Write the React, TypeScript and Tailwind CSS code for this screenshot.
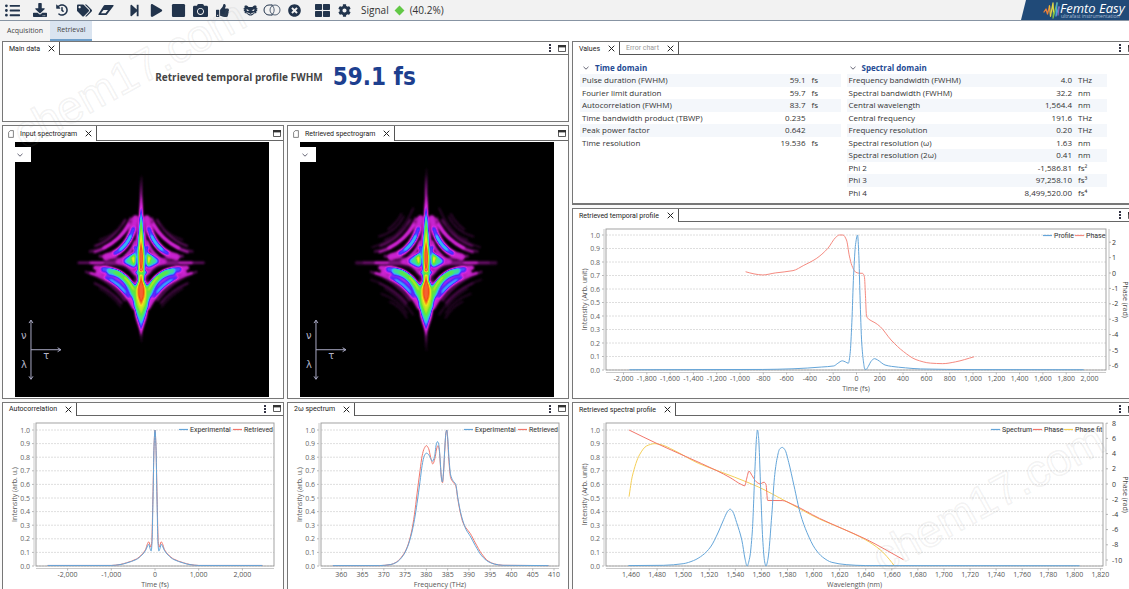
import { useId, useState, type ReactNode } from 'react';
import {
  FaCamera,
  FaCog,
  FaDownload,
  FaHistory,
  FaListUl,
  FaPlay,
  FaStepForward,
  FaStop,
  FaTags,
  FaThLarge,
  FaThumbsUp,
  FaTimesCircle,
} from 'react-icons/fa';

type Point = [number, number];

interface Series {
  label: string;
  color: string;
  points: Point[];
}

interface Tick {
  at: number;
  label: string;
}

interface Plot {
  left: number;
  right: number;
  top: number;
  bottom: number;
}

interface ChartProps {
  title: string;
  viewBox: string;
  plot: Plot;
  // pixel position of the y = 1.0 gridline
  unitTop: number;
  yLabel: string;
  yLabelX: number;
  xLabel: string;
  xTicks: Tick[];
  toX: (v: number) => number;
  series: Series[];
  legend: number[];
  phaseTicks?: Tick[];
}

// Monotone cubic interpolation, so that narrow peaks never overshoot
function smoothPath(pts: Point[]) {
  const n = pts.length;
  const slopes = pts.slice(1).map((p, i) => (p[1] - pts[i][1]) / (p[0] - pts[i][0]));
  const tangents = pts.map((_, i) => {
    if (i === 0) return slopes[0];
    if (i === n - 1) return slopes[n - 2];
    const a = slopes[i - 1];
    const b = slopes[i];
    return a * b <= 0 ? 0 : (2 * a * b) / (a + b);
  });
  let d = `M${pts[0][0].toFixed(2)} ${pts[0][1].toFixed(2)}`;
  for (let i = 1; i < n; i++) {
    const [x0, y0] = pts[i - 1];
    const [x1, y1] = pts[i];
    const h = (x1 - x0) / 3;
    d += `C${(x0 + h).toFixed(2)} ${(y0 + h * tangents[i - 1]).toFixed(2)} ${(x1 - h).toFixed(2)} ${(y1 - h * tangents[i]).toFixed(2)} ${x1.toFixed(2)} ${y1.toFixed(2)}`;
  }
  return d;
}

const BLUE = '#64a5d9';
const RED = '#f2766b';
const PINK = '#f58a80';
const YELLOW = '#f5cf57';

function Chart({
  title,
  viewBox,
  plot,
  unitTop,
  yLabel,
  yLabelX,
  xLabel,
  xTicks,
  toX,
  series,
  legend,
  phaseTicks,
}: ChartProps) {
  const toY = (v: number) => plot.bottom - v * (plot.bottom - unitTop);
  const midX = (plot.left + plot.right) / 2;
  const midY = (plot.top + plot.bottom) / 2;
  const levels = Array.from({ length: 11 }, (_, i) => i / 10);

  return (
    <svg
      viewBox={viewBox}
      role="img"
      aria-label={title}
      className="block h-auto w-full font-['Open_Sans',sans-serif] text-[7px]"
    >
      {levels.map((v) => (
        <g key={v}>
          <line x1={plot.left} x2={plot.right} y1={toY(v)} y2={toY(v)} stroke="#d6d6d6" strokeDasharray="2 1" strokeWidth="0.8" />
          <line x1={plot.left - 4} x2={plot.left - 2} y1={toY(v)} y2={toY(v)} stroke="#999" strokeWidth="0.7" />
          <text x={plot.left - 6} y={toY(v) + 2.5} textAnchor="end" fill="#666">
            {v.toFixed(1)}
          </text>
        </g>
      ))}
      <rect
        x={plot.left}
        y={plot.top}
        width={plot.right - plot.left}
        height={plot.bottom - plot.top}
        fill="none"
        stroke="#999"
        strokeWidth="0.9"
      />
      <path d={`M${plot.left - 2} ${plot.top}V${plot.bottom}M${plot.left} ${plot.bottom + 2.5}H${plot.right}`} stroke="#c4c4c4" strokeWidth="0.9" />
      {xTicks.map((t) => (
        <g key={t.label}>
          <line x1={toX(t.at)} x2={toX(t.at)} y1={plot.bottom + 2.5} y2={plot.bottom + 4.5} stroke="#999" strokeWidth="0.7" />
          <text x={toX(t.at)} y={plot.bottom + 11} textAnchor="middle" fill="#555">
            {t.label}
          </text>
        </g>
      ))}
      <text x={midX} y={plot.bottom + 21} textAnchor="middle" fill="#555">
        {xLabel}
      </text>
      <text transform={`translate(${yLabelX} ${midY}) rotate(-90)`} textAnchor="middle" fill="#555">
        {yLabel}
      </text>
      {phaseTicks && (
        <>
          <line x1={plot.right + 3} x2={plot.right + 3} y1={plot.top} y2={plot.bottom} stroke="#bbb" strokeWidth="0.9" />
          {phaseTicks.map((t) => (
            <g key={t.label}>
              <line x1={plot.right + 3} x2={plot.right + 5} y1={t.at} y2={t.at} stroke="#999" strokeWidth="0.7" />
              <text x={1112} y={t.at + 2.5} fill="#333">
                {t.label}
              </text>
            </g>
          ))}
          <text transform={`translate(1123 ${midY}) rotate(90)`} textAnchor="middle" fill="#444">
            Phase (rad)
          </text>
        </>
      )}
      {series
        .slice()
        .reverse()
        .map((s) => (
          <path
            key={s.label}
            d={smoothPath(s.points.map(([x, y]) => [toX(x), toY(y)]))}
            fill="none"
            stroke={s.color}
            strokeWidth="1"
            strokeLinejoin="round"
          />
        ))}
      {series.map((s, i) => (
        <g key={s.label}>
          <line x1={legend[i] - 11} x2={legend[i] - 2} y1={plot.top + 6.5} y2={plot.top + 6.5} stroke={s.color} strokeWidth="1.2" />
          <text x={legend[i]} y={plot.top + 9} fill="#333" className="font-['Roboto',sans-serif]">
            {s.label}
          </text>
        </g>
      ))}
    </svg>
  );
}

const mirror = (half: Point[]): Point[] => [...half, ...half.slice(0, -1).reverse().map(([x, y]): Point => [-x, y])];

const autocorrelation: Series[] = [
  {
    label: 'Experimental',
    color: BLUE,
    points: mirror([
      [-2458, 0.004], [-1000, 0.004], [-800, 0.01], [-650, 0.022], [-427, 0.048], [-300, 0.08], [-215, 0.115],
      [-170, 0.148], [-142, 0.16], [-115, 0.13], [-88, 0.11], [-70, 0.16], [-45, 0.5], [-22, 0.88], [0, 1],
    ]),
  },
  {
    label: 'Retrieved',
    color: RED,
    points: mirror([
      [-2458, 0.004], [-1000, 0.004], [-800, 0.011], [-650, 0.024], [-427, 0.051], [-300, 0.085], [-215, 0.122],
      [-170, 0.165], [-142, 0.178], [-115, 0.155], [-92, 0.138], [-74, 0.18], [-48, 0.5], [-22, 0.88], [0, 1],
    ]),
  },
];

const harmonicSpectrum: Series[] = [
  {
    label: 'Experimental',
    color: BLUE,
    points: [
      [358, 0.003], [369, 0.003], [371.5, 0.01], [373, 0.027], [374.5, 0.075], [375.5, 0.135], [376.5, 0.235],
      [377.2, 0.34], [377.8, 0.46], [378.5, 0.62], [379, 0.74], [379.5, 0.81], [380, 0.83], [380.5, 0.82],
      [381, 0.79], [381.4, 0.77], [381.9, 0.8], [382.3, 0.89], [382.6, 0.915], [382.9, 0.895], [383.2, 0.8],
      [383.5, 0.66], [383.75, 0.618], [384, 0.68], [384.3, 0.85], [384.6, 0.98], [384.8, 1], [385, 0.95],
      [385.3, 0.8], [385.7, 0.67], [386.2, 0.63], [386.9, 0.6], [387.4, 0.5], [388, 0.4], [388.6, 0.33],
      [389.3, 0.27], [390.3, 0.22], [391.5, 0.15], [393, 0.075], [394.5, 0.033], [396, 0.014], [398, 0.005], [408.7, 0.003],
    ],
  },
  {
    label: 'Retrieved',
    color: RED,
    points: [
      [358, 0.003], [369, 0.003], [371.5, 0.01], [373, 0.03], [374.5, 0.08], [375.5, 0.14], [376.5, 0.25],
      [377.2, 0.38], [377.8, 0.53], [378.5, 0.7], [379, 0.81], [379.5, 0.865], [380, 0.885], [380.5, 0.865],
      [381, 0.8], [381.5, 0.75], [382, 0.79], [382.4, 0.86], [382.7, 0.885], [383, 0.86], [383.3, 0.74],
      [383.6, 0.63], [383.8, 0.612], [384, 0.67], [384.3, 0.84], [384.6, 0.98], [384.8, 1], [385, 0.93],
      [385.3, 0.77], [385.7, 0.65], [386.2, 0.62], [386.9, 0.59], [387.4, 0.49], [388, 0.39], [388.6, 0.32],
      [389.3, 0.28], [390.3, 0.24], [391.5, 0.17], [393, 0.09], [394.5, 0.037], [396, 0.015], [398, 0.005], [408.7, 0.003],
    ],
  },
];

const temporalProfile: Series[] = [
  {
    label: 'Profile',
    color: BLUE,
    points: [
      [-1950, 0.002], [-805, 0.004], [-545, 0.009], [-300, 0.022], [-195, 0.03], [-160, 0.05], [-122, 0.068],
      [-95, 0.06], [-70, 0.05], [-55, 0.12], [-40, 0.35], [-25, 0.7], [-8, 0.93], [9, 1], [20, 0.85],
      [30, 0.55], [45, 0.2], [60, 0.06], [72, 0.005], [84, 0.005], [100, 0.025], [130, 0.07], [155, 0.084],
      [180, 0.075], [245, 0.037], [300, 0.027], [420, 0.016], [550, 0.008], [1000, 0.003], [1950, 0.002],
    ],
  },
  {
    label: 'Phase',
    color: PINK,
    points: [
      [-952, 0.728], [-880, 0.712], [-805, 0.704], [-698, 0.719], [-545, 0.736], [-453, 0.775], [-346, 0.825],
      [-248, 0.899], [-178, 0.983], [-147, 1], [-116, 1], [-86, 0.963], [-61, 0.844], [-40, 0.775], [-9, 0.726],
      [20, 0.717], [52, 0.716], [68, 0.69], [77, 0.55], [86, 0.4], [107, 0.375], [159, 0.35], [205, 0.32],
      [297, 0.222], [404, 0.136], [511, 0.077], [634, 0.051], [740, 0.047], [848, 0.06], [1010, 0.098],
    ],
  },
];

const spectralProfile: Series[] = [
  {
    label: 'Spectrum',
    color: BLUE,
    points: [
      [1458, 0.003], [1485, 0.005], [1500, 0.017], [1508, 0.04], [1515, 0.08], [1521, 0.14], [1527, 0.25],
      [1531, 0.34], [1534, 0.4], [1536, 0.418], [1538, 0.4], [1541, 0.32], [1545, 0.19], [1547.5, 0.05], [1549, 0],
      [1551, 0.06], [1553, 0.25], [1555, 0.7], [1556.3, 0.95], [1557, 1], [1557.8, 0.95], [1559.5, 0.55],
      [1561, 0.2], [1562.5, 0.03], [1563.5, 0], [1565, 0.05], [1568, 0.38], [1570, 0.65], [1572, 0.79],
      [1574, 0.86], [1576, 0.872], [1578, 0.855], [1581, 0.76], [1585, 0.59], [1590, 0.38], [1595, 0.245],
      [1601, 0.13], [1607, 0.065], [1614, 0.027], [1625, 0.01], [1640, 0.003], [1804, 0.002],
    ],
  },
  {
    label: 'Phase',
    color: RED,
    points: [
      [1458.5, 1], [1480, 0.9], [1502, 0.805], [1526, 0.7], [1536, 0.65], [1544.5, 0.6], [1547.3, 0.59],
      [1548.6, 0.638], [1550.5, 0.697], [1552.7, 0.667], [1556, 0.62], [1559, 0.604], [1562, 0.616],
      [1563.5, 0.6], [1564.8, 0.482], [1576, 0.481], [1583, 0.457], [1604.6, 0.35], [1622, 0.275],
      [1640, 0.198], [1669, 0.046],
    ],
  },
  {
    label: 'Phase fit',
    color: YELLOW,
    points: [
      [1458.5, 0.51], [1461, 0.66], [1466.5, 0.817], [1472, 0.883], [1478.3, 0.9], [1483.8, 0.89], [1492.5, 0.853],
      [1511.7, 0.755], [1526, 0.702], [1539.5, 0.653], [1558, 0.58], [1577, 0.485], [1604.6, 0.345], [1622, 0.275],
      [1640, 0.192], [1651, 0.12], [1658, 0.05], [1662, 0],
    ],
  },
];

const range = (from: number, to: number, step: number) =>
  Array.from({ length: Math.round((to - from) / step) + 1 }, (_, i) => from + i * step);

const ticks = (values: number[]): Tick[] => values.map((v) => ({ at: v, label: v.toLocaleString('en-US') }));

// Each stroke: path, grey level (0..1), width. Levels go through the colour map below.
const traceStrokes: [string, number, number][] = [
  // faint outer fringes
  ['M286 318Q340 300 376 240', 0.14, 6],
  ['M300 300Q345 285 364 255', 0.07, 5],
  ['M270 335Q345 322 388 248', 0.1, 7],
  ['M258 396Q330 420 375 482', 0.14, 6],
  ['M284 430Q335 452 365 490', 0.12, 5],
  ['M300 446Q340 470 362 500', 0.06, 5],
  // horizontal axis
  ['M236 369H330', 0.16, 6],
  ['M272 369H340', 0.26, 8],
  ['M320 369H372', 0.15, 16],
  ['M300 349Q345 356 385 360', 0.15, 8],
  // second upper fringe
  ['M284 337Q355 318 393 236', 0.22, 7],
  ['M312 324Q362 300 388 254', 0.31, 9],
  // first upper fringe
  ['M318 351Q388 336 407 236', 0.27, 20],
  ['M347 339Q384 322 401 268', 0.42, 15],
  ['M362 328Q382 312 392 290', 0.53, 11],
  // lower fringes
  ['M272 400Q355 418 402 506', 0.27, 8],
  ['M296 396Q372 408 404 500', 0.28, 17],
  ['M322 412Q362 430 386 466', 0.42, 17],
  ['M334 420Q358 434 376 456', 0.53, 9],
  ['M286 384Q360 378 408 450', 0.28, 12],
  ['M312 388Q366 392 404 450', 0.43, 18],
  ['M332 394Q384 402 410 478', 0.58, 20],
  ['M350 398Q390 414 412 486', 0.67, 15],
  ['M376 412Q398 432 414 476', 0.78, 9],
  // gap above the lower wing
  ['M300 401Q366 420 390 470', 0.22, 2],
  ['M352 378Q392 382 411 424', 0.06, 6],
  // inner lobes
  ['M352 366Q392 346 406 306M356 368Q388 374 404 400', 0.27, 9],
  ['M376 364L402 344V378Z', 0.44, 14],
  ['M408 322V350', 0.54, 10],
  ['M382 364L402 348V374Z', 0.6, 10],
  ['M396 354L403 350V370Z', 0.74, 10],
  ['M401 354V366', 0.86, 6],
];

// Vertical lens shapes on the delay-zero axis: top, bottom, half width, level
const spine: [number, number, number, number][] = [
  [190, 570, 22, 0.22],
  [104, 612, 9, 0.28],
  [400, 590, 20, 0.33],
  [165, 585, 9, 0.44],
  [395, 572, 20, 0.47],
  [186, 560, 9, 0.56],
  [395, 552, 22, 0.62],
  [206, 530, 10, 0.68],
  [405, 532, 18, 0.76],
  [226, 516, 8, 0.82],
  [304, 400, 9, 0.92],
  [408, 500, 11, 0.92],
];

const lens = (top: number, bottom: number, half: number) => {
  const quarter = (bottom - top) / 4;
  return `M424 ${top}C${424 + half / 2} ${top + quarter} ${424 + half} ${top + quarter} ${424 + half} ${top + quarter * 2}C${424 + half} ${bottom - quarter} ${424 + half / 2} ${bottom - quarter} 424 ${bottom}C${424 - half / 2} ${bottom - quarter} ${424 - half} ${bottom - quarter} ${424 - half} ${top + quarter * 2}C${424 - half} ${top + quarter} ${424 - half / 2} ${top + quarter} 424 ${top}Z`;
};

const grey = (level: number) => {
  const v = Math.round(level * 255);
  return `rgb(${v} ${v} ${v})`;
};

function HalfTrace() {
  return (
    <g fill="none" strokeLinecap="round" strokeLinejoin="round">
      {traceStrokes.map(([d, level, width]) => (
        <path key={d} d={d} stroke={grey(level)} strokeWidth={width} />
      ))}
    </g>
  );
}

function Spectrogram({ label, retrieved = false }: { label: string; retrieved?: boolean }) {
  const id = useId();
  return (
    <svg viewBox="45 6 763 765" role="img" aria-label={label} className="block h-auto w-full bg-black">
      <filter id={id} filterUnits="userSpaceOnUse" x="45" y="6" width="763" height="765" colorInterpolationFilters="sRGB">
        <feGaussianBlur stdDeviation="2.6" />
        <feComponentTransfer>
          <feFuncR type="table" tableValues="0 .3 .65 .85 .3 .2 .25 .4 .95 .95 1" />
          <feFuncG type="table" tableValues="0 .04 .1 .15 .15 .7 .9 .9 .9 .3 .7" />
          <feFuncB type="table" tableValues="0 .3 .65 .88 1 1 .5 .2 .1 .08 .6" />
        </feComponentTransfer>
      </filter>
      <g filter={`url(#${id})`}>
        <rect x="45" y="6" width="763" height="765" fill="#000" />
        {retrieved && (
          <g fill="none" strokeLinecap="round">
            {[0, 1].map((side) => (
              <g key={side} transform={side ? 'matrix(-1 0 0 1 848 0)' : undefined}>
                <path d="M282 290Q335 275 356 230M310 268Q335 250 350 222M262 322Q345 300 385 205" stroke={grey(0.07)} strokeWidth="5" />
                <path d="M290 462Q340 480 366 520M315 486Q345 500 366 534M258 420Q330 440 385 525" stroke={grey(0.06)} strokeWidth="5" />
                <path d="M215 369H330" stroke={grey(0.09)} strokeWidth="10" />
              </g>
            ))}
            <path d={lens(80, 640, 8)} fill={grey(0.2)} />
          </g>
        )}
        {spine.slice(0, 1).map(([top, bottom, half, level]) => (
          <path key={level} d={lens(top, bottom, half)} fill={grey(level)} />
        ))}
        <HalfTrace />
        <g transform="matrix(-1 0 0 1 848 0)">
          <HalfTrace />
        </g>
        <path d="M412 300V402M436 300V402" stroke={grey(0.2)} strokeWidth="4" />
        {spine.slice(1).map(([top, bottom, half, level]) => (
          <path key={`${top}-${bottom}`} d={lens(top, bottom, half)} fill={grey(level)} />
        ))}
        <path d="M408 398H440" stroke={grey(0.6)} strokeWidth="9" />
        <circle cx="424" cy="391" r="6" fill={grey(1)} />
      </g>
      <g fill="none" stroke="#a9a9c4" strokeWidth="3">
        <path d="M93 542V718M87 550L93 541L99 550M87 710L93 719L99 710M93 630H182M173 624L183 630L173 636" />
      </g>
      <g fill="#b4b4c8" className="font-['DejaVu_Sans',sans-serif] text-[30px]">
        <text x="63" y="597">ν</text>
        <text x="63" y="685">λ</text>
        <text x="130" y="659">τ</text>
      </g>
    </svg>
  );
}

function CloseIcon() {
  return (
    <svg width="7" height="7" viewBox="0 0 7 7" stroke="#222" strokeWidth="1" aria-hidden="true">
      <path d="M.7 .7L6.3 6.3M6.3 .7L.7 6.3" />
    </svg>
  );
}

function PageIcon() {
  return (
    <svg width="6" height="8" viewBox="0 0 6 8" fill="none" stroke="#666" strokeWidth="0.8" aria-hidden="true">
      <path d="M2.2 .6H5.4V7.4H.6V2.4Z" />
    </svg>
  );
}

interface PanelProps {
  tabs: string[];
  page?: boolean;
  menu?: boolean;
  className?: string;
  children: ReactNode;
}

function Panel({ tabs, page = false, menu = true, className = '', children }: PanelProps) {
  const [active, setActive] = useState(tabs[0]);
  return (
    <section className={`flex flex-col border border-[#777] bg-white ${className}`}>
      <header className={`flex items-stretch ${page ? 'h-[15px]' : 'h-[13px]'}`}>
        {tabs.map((tab) => (
          <div
            key={tab}
            className={`flex items-center gap-2 border-r border-[#555] pr-1 ${page ? 'pl-[5px]' : 'pl-[6px]'} ${tab === active ? '' : 'border-b'}`}
          >
            <button
              type="button"
              onClick={() => setActive(tab)}
              className={`flex items-center gap-[6px] font-['Roboto',sans-serif] text-[7px] leading-[10px] whitespace-nowrap ${tab === active ? 'text-[#222]' : 'text-[#999]'}`}
            >
              {page && <PageIcon />}
              {tab}
            </button>
            <button type="button" aria-label={`Close ${tab}`}>
              <CloseIcon />
            </button>
          </div>
        ))}
        <div className="flex flex-1 items-center justify-end gap-[7px] border-b border-[#666] pr-[2px]">
          {menu && (
            <button type="button" aria-label="Panel menu">
              <svg width="2" height="8" viewBox="0 0 2 8" fill="#334" aria-hidden="true">
                <path d="M0 0h2v2H0zM0 3h2v2H0zM0 6h2v2H0z" />
              </svg>
            </button>
          )}
          <button type="button" aria-label="Maximize panel">
            <svg width="8" height="7" viewBox="0 0 8 7" aria-hidden="true">
              <path d="M.5 1V6.5H7.5V1Z" fill="#fff" stroke="#333" strokeWidth="0.8" />
              <path d="M0 0H8V2.4H0Z" fill="#333" />
            </svg>
          </button>
        </div>
      </header>
      {children}
    </section>
  );
}

interface Measure {
  name: string;
  value: string;
  unit: string;
}

const timeDomain: Measure[] = [
  { name: 'Pulse duration (FWHM)', value: '59.1', unit: 'fs' },
  { name: 'Fourier limit duration', value: '59.7', unit: 'fs' },
  { name: 'Autocorrelation (FWHM)', value: '83.7', unit: 'fs' },
  { name: 'Time bandwidth product (TBWP)', value: '0.235', unit: '' },
  { name: 'Peak power factor', value: '0.642', unit: '' },
  { name: 'Time resolution', value: '19.536', unit: 'fs' },
];

const spectralDomain: Measure[] = [
  { name: 'Frequency bandwidth (FWHM)', value: '4.0', unit: 'THz' },
  { name: 'Spectral bandwidth (FWHM)', value: '32.2', unit: 'nm' },
  { name: 'Central wavelength', value: '1,564.4', unit: 'nm' },
  { name: 'Central frequency', value: '191.6', unit: 'THz' },
  { name: 'Frequency resolution', value: '0.20', unit: 'THz' },
  { name: 'Spectral resolution (ω)', value: '1.63', unit: 'nm' },
  { name: 'Spectral resolution (2ω)', value: '0.41', unit: 'nm' },
  { name: 'Phi 2', value: '-1,586.81', unit: 'fs²' },
  { name: 'Phi 3', value: '97,258.10', unit: 'fs³' },
  { name: 'Phi 4', value: '8,499,520.00', unit: 'fs⁴' },
];

function Chevron() {
  return (
    <svg width="6" height="4" viewBox="0 0 6 4" fill="none" stroke="#556" strokeWidth="0.9" aria-hidden="true">
      <path d="M.5 .8L3 3.2L5.5 .8" />
    </svg>
  );
}

function MeasureTable({ title, rows, height }: { title: string; rows: Measure[]; height: string }) {
  return (
    <div className="flex-1">
      <button
        type="button"
        className="flex h-[13px] items-center gap-[6px] pl-[3px] font-['Open_Sans',sans-serif] text-[8px] font-bold text-[#234a94]"
      >
        <Chevron />
        {title}
      </button>
      <table
        aria-label={title}
        className={`w-full border-collapse font-['Open_Sans',sans-serif] text-[8px] leading-[12px] text-[#333] ${height}`}
      >
        <tbody>
          {rows.map((row) => (
            <tr key={row.name} className="odd:bg-[#f4f7fb]">
              <th scope="row" className="p-0 pl-[2px] text-left font-normal">
                {row.name}
              </th>
              <td className="p-0 text-right">{row.value}</td>
              <td className="w-[35px] p-0 pl-[6px]">{row.unit}</td>
            </tr>
          ))}
        </tbody>
      </table>
    </div>
  );
}

function EraserIcon() {
  return (
    <svg width="16" height="12" viewBox="0 0 32 24" fill="currentColor" aria-hidden="true">
      <path fillRule="evenodd" d="M14 2H30Q32 2 31 4L18 21Q17 22 15 22H2Q0 22 1 20L11 4Q12 2 14 2ZM11 12L6 18.500H15L20 12Z" />
    </svg>
  );
}

function FrogIcon() {
  return (
    <svg width="15" height="11" viewBox="0 0 30 22" fill="currentColor" aria-hidden="true">
      <path d="M3 2C6 0 10 2 11 4H19C20 2 24 0 27 2L27 6L30 8L27 9L29 12L26 13L27 16L22 17C20 20 18 21 15 21S10 20 8 17L3 16L4 13L1 12L3 9L0 8L3 6Z" />
      <path d="M7 8L13 11L8 12ZM23 8L17 11L22 12ZM5 14L12 16L15 18L18 16L25 14L18 18L15 19L12 18Z" fill="#f2f2f2" />
    </svg>
  );
}

function OverlapIcon() {
  return (
    <svg width="18" height="12" viewBox="0 0 36 24" fill="none" stroke="currentColor" strokeWidth="2" aria-hidden="true">
      <path d="M19 2H12A10 10 0 0 0 12 22H19" />
      <circle cx="24" cy="12" r="10" strokeWidth="1.5" />
      <path d="M17 2C24 6 24 18 17 22" strokeWidth="1.5" />
    </svg>
  );
}

const toolbarGroups: { label: string; icon: ReactNode }[][] = [
  [{ label: 'List', icon: <FaListUl size={15} /> }],
  [
    { label: 'Save', icon: <FaDownload size={14} /> },
    { label: 'History', icon: <FaHistory size={12} /> },
    { label: 'Tags', icon: <FaTags size={15} /> },
    { label: 'Clear', icon: <EraserIcon /> },
  ],
  [
    { label: 'Step', icon: <FaStepForward size={13} /> },
    { label: 'Play', icon: <FaPlay size={13} /> },
    { label: 'Stop', icon: <FaStop size={15} /> },
    { label: 'Snapshot', icon: <FaCamera size={15} /> },
    { label: 'Validate', icon: <FaThumbsUp size={13} /> },
  ],
  [
    { label: 'Frog', icon: <FrogIcon /> },
    { label: 'Overlap', icon: <OverlapIcon /> },
    { label: 'Cancel', icon: <FaTimesCircle size={13} /> },
  ],
  [
    { label: 'Layout', icon: <FaThLarge size={15} /> },
    { label: 'Settings', icon: <FaCog size={13} /> },
  ],
];

function Brand() {
  return (
    <svg width="108" height="20" viewBox="0 0 108 20" role="img" aria-label="Femto Easy" className="shrink-0">
      <path d="M5 0H108V20H0Z" fill="#204a78" />
      <g fill="none" strokeWidth="1.3" strokeLinejoin="round" strokeLinecap="round">
        <path d="M23 12L25 9L26.500 14L28.500 6" stroke="#e8803a" />
        <path d="M28.500 6L29.500 16" stroke="#e9b93b" />
        <path d="M29.500 16L32 3L32.500 13" stroke="#e3d843" />
        <path d="M32.500 13L32 18L36 3" stroke="#7cc24a" />
        <path d="M36 3L35 16L38 7" stroke="#4aa7d8" />
        <path d="M38 7L37 15" stroke="#8a63b8" />
      </g>
      <text x="39" y="13" fill="#fff" className="font-['Open_Sans',sans-serif] text-[13px] italic">
        Femto Easy
      </text>
      <text x="40" y="18" fill="#a9bdd4" className="font-['Open_Sans',sans-serif] text-[5px]">
        ultrafast instrumentation
      </text>
    </svg>
  );
}

function Toolbar() {
  return (
    <div className="flex h-[21px] items-center justify-between border-b border-[#8794a3] bg-[#f2f2f2]">
      <div className="flex items-center gap-[6px] pl-px text-[#22344c]">
        {toolbarGroups.map((group) => (
          <div key={group[0].label} className="flex">
            {group.map((item) => (
              <button
                key={item.label}
                type="button"
                aria-label={item.label}
                className="flex h-[18px] w-[22px] items-center justify-center"
              >
                {item.icon}
              </button>
            ))}
          </div>
        ))}
        <div className="flex items-center gap-[7px] font-['Open_Sans',sans-serif] text-[10px] text-[#333]">
          Signal
          <span className="size-[7px] rotate-45 bg-[#62c846]" />
          (40.2%)
        </div>
      </div>
      <Brand />
    </div>
  );
}

function Watermark({ className }: { className: string }) {
  return (
    <svg width="270" height="190" viewBox="0 0 270 190" aria-hidden="true" className={`pointer-events-none absolute overflow-visible ${className}`}>
      <text
        transform="translate(24 175) rotate(-29)"
        fill="none"
        stroke="#888"
        strokeWidth="1.5"
        strokeOpacity="0.11"
        className="font-['Liberation_Sans',sans-serif] text-[45px]"
      >
        chem17.com
      </text>
    </svg>
  );
}

export default function App() {
  const [view, setView] = useState('Retrieval');

  return (
    <div className="relative min-h-screen overflow-hidden bg-[#fafafa]">
      <Toolbar />
      <nav className="flex h-5 bg-white">
        {['Acquisition', 'Retrieval'].map((name) => (
          <button
            key={name}
            type="button"
            onClick={() => setView(name)}
            className={`px-[7px] font-['Open_Sans',sans-serif] text-[7px] text-[#444] ${name === view ? 'border-b-2 border-[#6f9fca] bg-[#dae4f0]' : 'bg-[#f4f4f4]'}`}
          >
            {name}
          </button>
        ))}
      </nav>

      {/* The right column runs slightly past the window edge */}
      <main className="-mr-[10px] grid grid-cols-2 gap-[3px] pl-[2px]">
        <div className="flex flex-col gap-[3px]">
          <Panel tabs={['Main data']} className="h-[81px]">
            <div className="flex items-center justify-center gap-[10px] pt-[7px] font-bold">
              <span className="font-['Open_Sans',sans-serif] text-[10px] text-[#444]">
                Retrieved temporal profile FWHM
              </span>
              <span className="font-['DejaVu_Sans_Condensed','DejaVu_Sans',sans-serif] text-[24px] leading-[30px] text-[#1d3f8f]">
                59.1 fs
              </span>
            </div>
          </Panel>

          <div className="grid grid-cols-2 gap-[3px]">
            {['Input spectrogram', 'Retrieved spectrogram'].map((name, i) => (
              <Panel key={name} tabs={[name]} page menu={false} className="h-full pb-px">
                <div className="relative mt-px mr-[14px] ml-[12px]">
                  <Spectrogram label={name} retrieved={i === 1} />
                  <button
                    type="button"
                    aria-label="Spectrogram options"
                    className="absolute top-[5px] left-0 flex h-[15px] w-4 items-center bg-white pl-[2px]"
                  >
                    <Chevron />
                  </button>
                </div>
              </Panel>
            ))}
          </div>

          <div className="grid grid-cols-2 gap-[3px]">
            <Panel tabs={['Autocorrelation']} className="border-b-0">
              <Chart
                title="Autocorrelation"
                viewBox="3 416 280 173"
                plot={{ left: 36, right: 274, top: 423, bottom: 566 }}
                unitTop={430}
                yLabel="Intensity (arb. u.)"
                yLabelX={17}
                xLabel="Time (fs)"
                xTicks={ticks(range(-2000, 2000, 1000))}
                toX={(v) => 155 + v * 0.0437}
                series={autocorrelation}
                legend={[190, 244]}
              />
            </Panel>
            <Panel tabs={['2ω spectrum']} className="border-b-0">
              <Chart
                title="2ω spectrum"
                viewBox="288 416 280 173"
                plot={{ left: 321, right: 559, top: 423, bottom: 566 }}
                unitTop={430}
                yLabel="Intensity (arb. u.)"
                yLabelX={302}
                xLabel="Frequency (THz)"
                xTicks={ticks(range(360, 410, 5))}
                toX={(v) => 341.3 + (v - 360) * 4.254}
                series={harmonicSpectrum}
                legend={[475, 529]}
              />
            </Panel>
          </div>
        </div>

        <div className="flex flex-col gap-[3px]">
          <Panel tabs={['Values', 'Error chart']} className="h-[164px] border-b-2">
            <div className="flex gap-[6px] pt-[6px] pr-[31px] pl-[7px]">
              <MeasureTable title="Time domain" rows={timeDomain} height="h-[75px]" />
              <MeasureTable title="Spectral domain" rows={spectralDomain} height="h-[125px]" />
            </div>
          </Panel>

          <Panel tabs={['Retrieved temporal profile']}>
            <Chart
              title="Retrieved temporal profile"
              viewBox="573 222 565 176"
              plot={{ left: 606, right: 1106, top: 229, bottom: 370 }}
              unitTop={235}
              yLabel="Intensity (Arb. unit)"
              yLabelX={587}
              xLabel="Time (fs)"
              xTicks={ticks(range(-2000, 2000, 200))}
              toX={(v) => 856.5 + v * 0.1165}
              series={temporalProfile}
              legend={[1054, 1086]}
              phaseTicks={range(-6, 2, 1).map((v) => ({ at: 273 - v * 15.4, label: String(v) }))}
            />
          </Panel>

          <Panel tabs={['Retrieved spectral profile']} className="border-b-0">
            <Chart
              title="Retrieved spectral profile"
              viewBox="573 416 565 173"
              plot={{ left: 606, right: 1103, top: 423, bottom: 566 }}
              unitTop={430}
              yLabel="Intensity (Arb. unit)"
              yLabelX={587}
              xLabel="Wavelength (nm)"
              xTicks={ticks(range(1460, 1820, 20))}
              toX={(v) => 631 + (v - 1460) * 1.304}
              series={spectralProfile}
              legend={[1002, 1044, 1075]}
              phaseTicks={range(-10, 8, 2).map((v) => ({ at: 484 - v * 7.6, label: String(v) }))}
            />
          </Panel>
        </div>
      </main>

      <Watermark className="top-[-25px] left-0" />
      <Watermark className="right-0 bottom-0" />
    </div>
  );
}
